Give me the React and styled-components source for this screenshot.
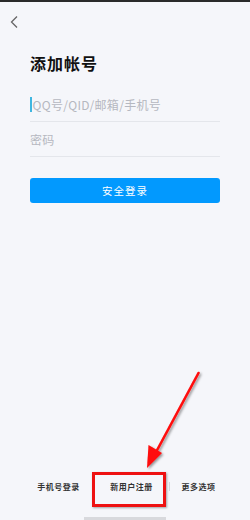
import React from "react";
import styled, { createGlobalStyle } from "styled-components";

const Global = createGlobalStyle`
  html, body { margin: 0; padding: 0; background: #f5f6fa; }
  body { font-family: "Noto Sans CJK SC", "Noto Sans", sans-serif; }
`;

const Screen = styled.div`
  position: relative;
  width: 250px;
  height: 520px;
  background: #f5f6fa;
  border-top: 2px solid #2a2a2a;
  box-sizing: border-box;
  display: flex;
  flex-direction: column;
  overflow: hidden;
`;

const TopBar = styled.div`
  height: 40px;
  display: flex;
  align-items: center;
  padding-left: 9px;
`;

const Form = styled.div`
  padding: 0 30px;
  display: flex;
  flex-direction: column;
`;

const Title = styled.h1`
  margin: 10px 0 0 0;
  font-size: 16px;
  line-height: 22px;
  font-weight: 700;
  color: #111;
  letter-spacing: 1px;
`;

const Field = styled.div`
  height: 34px;
  border-bottom: 1px solid #e4e6eb;
  display: flex;
  align-items: center;
  margin-top: ${(p) => p.$top}px;
`;

const Cursor = styled.span`
  width: 1.5px;
  height: 15px;
  background: #3fb6e0;
  margin-right: 1px;
`;

const Placeholder = styled.span`
  font-size: 12px;
  color: #b5b8c0;
  letter-spacing: 0.3px;
`;

const Button = styled.div`
  margin-top: 21px;
  height: 25px;
  border-radius: 3px;
  background: #0299fe;
  color: #fff;
  font-size: 10.5px;
  display: flex;
  align-items: center;
  justify-content: center;
  letter-spacing: 1px;
`;

const Spacer = styled.div`
  flex: 1;
`;

const Links = styled.div`
  display: flex;
  align-items: center;
  justify-content: center;
  height: 20px;
  margin-bottom: 24px;
`;

const Link = styled.span`
  font-size: 8px;
  font-weight: 700;
  color: #333;
  width: ${(p) => p.$w}px;
  text-align: center;
  letter-spacing: 0.5px;
`;

const Sep = styled.span`
  width: 1px;
  height: 9px;
  background: #d5d7dc;
`;

const HomeBar = styled.div`
  position: absolute;
  left: 84px;
  bottom: 0;
  width: 82px;
  height: 3px;
  background: #d8d9dd;
`;

const RedBox = styled.div`
  position: absolute;
  left: 92px;
  top: 470px;
  width: 74px;
  height: 35px;
  border: 3px solid #ee1111;
  box-sizing: border-box;
  box-shadow: 1px 1px 2px rgba(0, 0, 0, 0.35);
`;

const Arrow = styled.svg`
  position: absolute;
  left: 0;
  top: 0;
  pointer-events: none;
`;

export default function App() {
  return (
    <>
      <Global />
      <Screen>
        <TopBar>
          <svg width="12" height="14" viewBox="0 0 12 14">
            <path d="M8 1.5 L2.5 7 L8 12.5" fill="none" stroke="#666" strokeWidth="1.3" />
          </svg>
        </TopBar>
        <Form>
          <Title>添加帐号</Title>
          <Field $top={13}>
            <Cursor />
            <Placeholder>QQ号/QID/邮箱/手机号</Placeholder>
          </Field>
          <Field $top={0}>
            <Placeholder>密码</Placeholder>
          </Field>
          <Button>安全登录</Button>
        </Form>
        <Spacer />
        <Links>
          <Link $w={72}>手机号登录</Link>
          <Link $w={74}>新用户注册</Link>
          <Sep />
          <Link $w={58}>更多选项</Link>
        </Links>
        <HomeBar />
        <RedBox />
        <Arrow width="250" height="520" viewBox="0 0 250 520">
          <defs>
            <filter id="sh" x="-20%" y="-20%" width="140%" height="140%">
              <feDropShadow dx="1.5" dy="1.5" stdDeviation="1" floodColor="#000" floodOpacity="0.4" />
            </filter>
          </defs>
          <g filter="url(#sh)">
            <line x1="198.5" y1="371" x2="155" y2="452" stroke="#ff0a0a" strokeWidth="2.6" strokeLinecap="round" />
            <polygon points="147,466 148.5,443 162,451" fill="#ff0a0a" />
          </g>
        </Arrow>
      </Screen>
    </>
  );
}
